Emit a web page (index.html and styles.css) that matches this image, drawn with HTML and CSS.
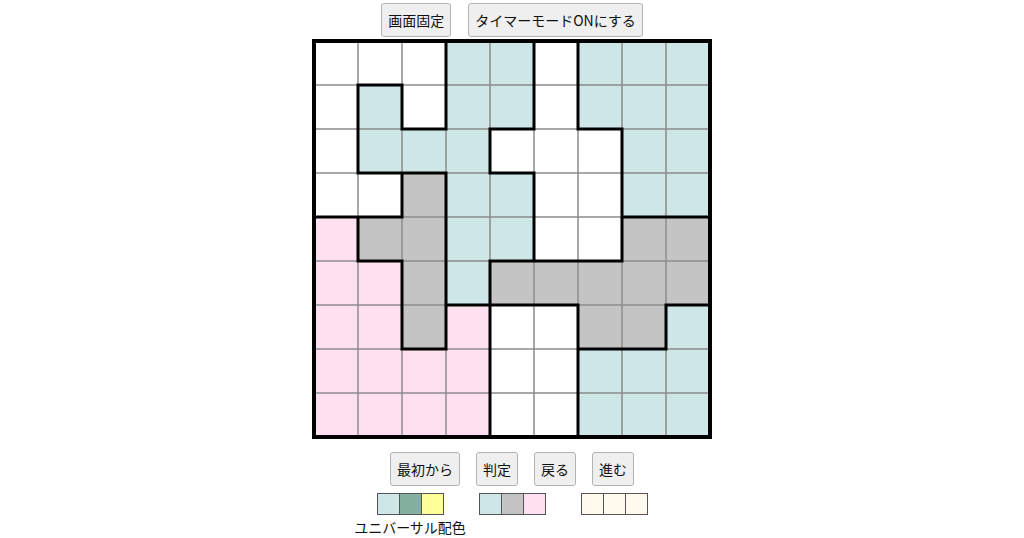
FILE: index.html
```html
<!DOCTYPE html>
<html lang="ja">
<head>
<meta charset="utf-8">
<title>パズル</title>
<link rel="stylesheet" href="styles.css">
</head>
<body>
<div class="toolbar">
  <button class="btn">画面固定</button>
  <button class="btn">タイマーモードONにする</button>
</div>
<div class="board">
  <svg class="board-svg" width="400" height="400" viewBox="0 0 400 400">
    <rect class="cell-w" x="2" y="2" width="396" height="396"/>
    <g class="cell-b">
      <rect x="134" y="2" width="88" height="44"/>
      <rect x="266" y="2" width="132" height="44"/>
      <rect x="46" y="46" width="44" height="44"/>
      <rect x="134" y="46" width="88" height="44"/>
      <rect x="266" y="46" width="132" height="44"/>
      <rect x="46" y="90" width="132" height="44"/>
      <rect x="310" y="90" width="88" height="44"/>
      <rect x="134" y="134" width="88" height="44"/>
      <rect x="310" y="134" width="88" height="44"/>
      <rect x="134" y="178" width="88" height="44"/>
      <rect x="134" y="222" width="44" height="44"/>
      <rect x="354" y="266" width="44" height="44"/>
      <rect x="266" y="310" width="132" height="88"/>
    </g>
    <g class="cell-g">
      <rect x="90" y="134" width="44" height="44"/>
      <rect x="46" y="178" width="88" height="44"/>
      <rect x="310" y="178" width="88" height="44"/>
      <rect x="90" y="222" width="44" height="44"/>
      <rect x="178" y="222" width="220" height="44"/>
      <rect x="90" y="266" width="44" height="44"/>
      <rect x="266" y="266" width="88" height="44"/>
    </g>
    <g class="cell-p">
      <rect x="2" y="178" width="44" height="44"/>
      <rect x="2" y="222" width="88" height="44"/>
      <rect x="2" y="266" width="88" height="44"/>
      <rect x="134" y="266" width="44" height="44"/>
      <rect x="2" y="310" width="176" height="88"/>
    </g>
    <path class="thin" d="M46 2V398M90 2V398M134 2V398M178 2V398M222 2V398M266 2V398M310 2V398M354 2V398M2 46H398M2 90H398M2 134H398M2 178H398M2 222H398M2 266H398M2 310H398M2 354H398"/>
    <path class="thick" d="M46 46V134M46 178V222M90 46V90M90 134V178M90 222V310M134 2V90M134 134V310M178 90V134M178 222V398M222 2V90M222 134V222M266 2V90M266 266V398M310 90V222M354 266V310M46 46H90M90 90H134M178 90H222M266 90H310M46 134H134M178 134H222M2 178H90M310 178H398M46 222H90M178 222H310M134 266H266M354 266H398M90 310H134M266 310H354"/>
    <rect class="outer" x="2" y="2" width="396" height="396"/>
  </svg>
</div>
<div class="controls">
  <button class="btn">最初から</button>
  <button class="btn">判定</button>
  <button class="btn">戻る</button>
  <button class="btn">進む</button>
</div>
<div class="palettes">
  <div class="palette">
    <div class="swatches">
      <span class="sw sw-lblue"></span>
      <span class="sw sw-green"></span>
      <span class="sw sw-yellow"></span>
    </div>
    <div class="palette-label">ユニバーサル配色</div>
  </div>
  <div class="palette">
    <div class="swatches">
      <span class="sw sw-lblue"></span>
      <span class="sw sw-gray"></span>
      <span class="sw sw-pink"></span>
    </div>
  </div>
  <div class="palette">
    <div class="swatches">
      <span class="sw sw-cream"></span>
      <span class="sw sw-cream"></span>
      <span class="sw sw-cream"></span>
    </div>
  </div>
</div>
</body>
</html>
```

FILE: styles.css
```css
html, body {
  margin: 0;
  padding: 0;
  background: #ffffff;
}

body {
  font-family: "Noto Sans CJK JP", "Noto Sans", sans-serif;
  color: #111;
}

.toolbar {
  display: flex;
  justify-content: center;
  gap: 17px;
  padding-top: 3px;
}

.btn {
  font-family: "Noto Sans CJK JP", "Noto Sans", sans-serif;
  font-size: 14px;
  line-height: 20px;
  padding: 6px 6px;
  margin: 0;
  border: 1px solid #b3b3b3;
  border-radius: 3px;
  background: #efefef;
  color: #111;
}

.board {
  width: 400px;
  height: 400px;
  margin: 2px auto 0;
}

.board-svg {
  display: block;
}

.cell-w { fill: #ffffff; }
.cell-b { fill: #cfe6e7; }
.cell-g { fill: #c4c4c4; }
.cell-p { fill: #ffe0f1; }

.thin {
  fill: none;
  stroke: #8c8c8c;
  stroke-width: 1.5;
}

.thick {
  fill: none;
  stroke: #000;
  stroke-width: 3;
  stroke-linecap: square;
}

.outer {
  fill: none;
  stroke: #000;
  stroke-width: 4;
}

.controls {
  display: flex;
  justify-content: center;
  gap: 16px;
  margin-top: 13px;
}

.palettes {
  display: grid;
  grid-template-columns: repeat(3, 102px);
  justify-content: center;
  margin-top: 7px;
}

.palette {
  display: flex;
  flex-direction: column;
  align-items: center;
}

.swatches {
  display: flex;
  border: 1px solid #555;
  background: #555;
  gap: 1px;
}

.sw {
  display: block;
  width: 21px;
  height: 20px;
}

.sw-lblue { background: #cfe6e7; }
.sw-green { background: #82b09c; }
.sw-yellow { background: #ffff99; }
.sw-gray { background: #c4c4c4; }
.sw-pink { background: #ffe0f1; }
.sw-cream { background: #fffaed; }

.palette-label {
  font-size: 14px;
  line-height: 20px;
  margin-top: 2px;
  white-space: nowrap;
  color: #111;
}
```
